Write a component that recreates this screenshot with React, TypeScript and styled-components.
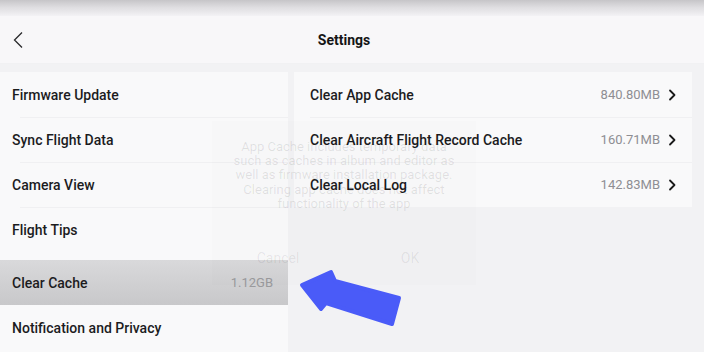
import styled, { createGlobalStyle } from "styled-components";

const GlobalStyle = createGlobalStyle`
  html, body {
    margin: 0;
    padding: 0;
    background: #f2f2f4;
    font-family: Roboto, "Noto Sans", "Liberation Sans", sans-serif;
    color: #1c1c1e;
    overflow: hidden;
  }
`;

const Screen = styled.div`
  position: relative;
  width: 704px;
  height: 352px;
  overflow: hidden;
  background: #f2f2f4;
`;

const TopShade = styled.div`
  height: 16px;
  background: linear-gradient(to bottom, #c6c5c8 0%, #dedde0 45%, #f3f2f5 100%);
`;

const Header = styled.header`
  height: 47px;
  display: grid;
  grid-template-columns: 1fr auto 1fr;
  align-items: center;
  padding-right: 16px;
  background: #f8f7f9;
  border-bottom: 1px solid #f1f1f3;
`;

const BackButton = styled.button`
  justify-self: start;
  margin-left: 12px;
  padding: 0;
  border: 0;
  background: none;
  display: flex;
  align-items: center;
`;

const Title = styled.h1`
  margin: 0;
  font-size: 14px;
  font-weight: 700;
  color: #151515;
`;

const Body = styled.main`
  display: grid;
  grid-template-columns: 288px 1fr;
  gap: 6px;
  padding-top: 8px;
`;

const SidePanel = styled.nav`
  background: #f9f9fa;
  height: 290px;
`;

const SideGroup = styled.div`
  & + & {
    margin-top: 8px;
  }
`;

const SideRow = styled.div<{ $active?: boolean }>`
  height: 45px;
  display: flex;
  align-items: center;
  justify-content: space-between;
  padding: 0 15px 0 12px;
  font-size: 14px;
  font-weight: 500;
  position: relative;
  background: ${(p) =>
    p.$active ? "linear-gradient(to bottom, #d9d9db, #c8c8ca)" : "transparent"};

  & + &::before {
    content: "";
    position: absolute;
    top: 0;
    left: 20px;
    right: 0;
    height: 1px;
    background: #f0f0f2;
  }
`;

const SideValue = styled.span`
  font-size: 13px;
  font-weight: 400;
  color: #9a9a9d;
`;

const DetailColumn = styled.section`
  padding-right: 12px;
`;

const DetailPanel = styled.div`
  background: #f9f9fa;
`;

const DetailRow = styled.div`
  height: 45px;
  display: flex;
  align-items: center;
  padding: 0 16px;
  font-size: 14px;
  font-weight: 500;
  position: relative;

  & + &::before {
    content: "";
    position: absolute;
    top: 0;
    left: 16px;
    right: 0;
    height: 1px;
    background: #f0f0f2;
  }
`;

const RowLabel = styled.span`
  flex: 1;
`;

const RowValue = styled.span`
  font-size: 13px;
  font-weight: 400;
  color: #8e8e93;
  margin-right: 8px;
`;

const GhostDialog = styled.div`
  position: absolute;
  left: 212px;
  top: 121px;
  width: 264px;
  height: 164px;
  background: rgba(0, 0, 0, 0.006);
  display: flex;
  flex-direction: column;
  align-items: center;
  pointer-events: none;
`;

const GhostText = styled.p`
  margin: 19px 0 0;
  text-align: center;
  font-size: 13px;
  line-height: 14.2px;
  white-space: nowrap;
  color: rgba(0, 0, 0, 0.1);
`;

const GhostActions = styled.div`
  margin-top: auto;
  margin-bottom: 19px;
  width: 100%;
  display: grid;
  grid-template-columns: 1fr 1fr;
  justify-items: center;
  font-size: 14px;
  color: rgba(0, 0, 0, 0.08);
`;

const Pointer = styled.svg`
  position: absolute;
  left: 296px;
  top: 266px;
`;

const Chevron = () => (
  <svg width="8" height="12" viewBox="0 0 8 12">
    <path d="M2 1.5 L6.5 6 L2 10.5" fill="none" stroke="#1a1a1a" strokeWidth="1.8" strokeLinecap="round" strokeLinejoin="round" />
  </svg>
);

const sideItems = [
  ["Firmware Update", "Sync Flight Data", "Camera View", "Flight Tips"],
  ["Clear Cache", "Notification and Privacy"],
];

const cacheItems = [
  { label: "Clear App Cache", size: "840.80MB" },
  { label: "Clear Aircraft Flight Record Cache", size: "160.71MB" },
  { label: "Clear Local Log", size: "142.83MB" },
];

const ghostLines = [
  "App Cache includes temporary data",
  "such as caches in album and editor as",
  "well as firmware installation package.",
  "Clearing app cache does not affect",
  "functionality of the app",
];

export default function App() {
  return (
    <Screen>
      <GlobalStyle />
      <TopShade />
      <Header>
        <BackButton aria-label="Back">
          <svg width="12" height="18" viewBox="0 0 12 18">
            <path d="M10 1.5 L2.5 9 L10 16.5" fill="none" stroke="#2a2a2c" strokeWidth="1.3" strokeLinejoin="miter" />
          </svg>
        </BackButton>
        <Title>Settings</Title>
        <span />
      </Header>
      <Body>
        <SidePanel>
          {sideItems.map((group, gi) => (
            <SideGroup key={gi}>
              {group.map((item) => (
                <SideRow key={item} $active={item === "Clear Cache"}>
                  <span>{item}</span>
                  {item === "Clear Cache" && <SideValue>1.12GB</SideValue>}
                </SideRow>
              ))}
            </SideGroup>
          ))}
        </SidePanel>
        <DetailColumn>
          <DetailPanel>
            {cacheItems.map((c) => (
              <DetailRow key={c.label}>
                <RowLabel>{c.label}</RowLabel>
                <RowValue>{c.size}</RowValue>
                <Chevron />
              </DetailRow>
            ))}
          </DetailPanel>
        </DetailColumn>
      </Body>
      <GhostDialog>
        <GhostText>
          {ghostLines.map((line, i) => (
            <span key={i}>
              {line}
              <br />
            </span>
          ))}
        </GhostText>
        <GhostActions>
          <span>Cancel</span>
          <span>OK</span>
        </GhostActions>
      </GhostDialog>
      <Pointer width="110" height="64" viewBox="296 266 110 64">
        <polygon
          points="302,285 331,272 335,281 399,298 392,324 326,303 321,309"
          fill="#4a5bf8"
          stroke="#4a5bf8"
          strokeWidth="4"
          strokeLinejoin="round"
        />
      </Pointer>
    </Screen>
  );
}
